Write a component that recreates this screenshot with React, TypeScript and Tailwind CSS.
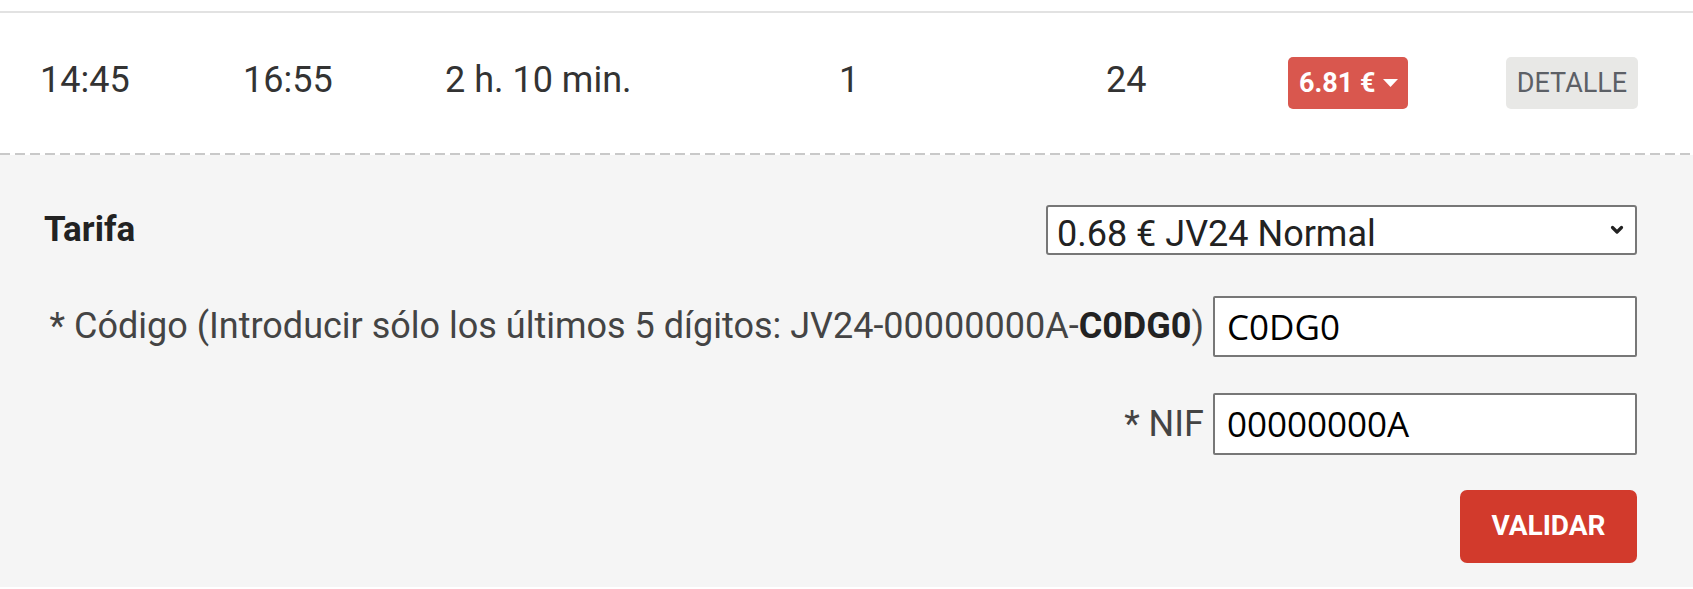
import { useState } from 'react';

function Caret() {
  return (
    <svg width="15" height="8" viewBox="0 0 15 8" className="shrink-0">
      <path d="M0 0 H15 L7.5 8 Z" fill="currentColor" />
    </svg>
  );
}

function Chevron() {
  return (
    <svg width="14" height="10" viewBox="0 0 14 10" className="pointer-events-none absolute right-[13px] top-1/2 -translate-y-1/2">
      <path d="M2.5 2.5 L7 7 L11.5 2.5" fill="none" stroke="#222" strokeWidth="3.2" strokeLinecap="round" strokeLinejoin="round" />
    </svg>
  );
}

export default function App() {
  const [tarifa, setTarifa] = useState('jv24');
  const [codigo, setCodigo] = useState('C0DG0');
  const [nif, setNif] = useState('00000000A');

  return (
    <div className="min-h-screen bg-white font-['Roboto',sans-serif]">
      <div className="mt-[11px] border-t-2 border-[#e2e2e2]">
        <div className="flex h-[140px] items-center pl-[40px] pr-[55px] text-[36px] text-[#333]">
          <span className="w-[203px] pb-[6px]">14:45</span>
          <span className="w-[202px] pb-[6px]">16:55</span>
          <span className="w-[394px] pb-[6px]">2 h. 10 min.</span>
          <span className="w-[267px] pb-[6px]">1</span>
          <span className="w-[182px] pb-[6px]">24</span>
          <button className="flex h-[52px] w-[120px] items-center gap-[7px] rounded-[5px] bg-[#d9574e] pl-[11px] text-[27px] font-bold text-white">
            6.81 €
            <Caret />
          </button>
          <button className="ml-auto h-[52px] w-[132px] rounded-[5px] bg-[#e8e8e6] text-[27px] text-[#5c6066]">
            DETALLE
          </button>
        </div>
      </div>

      <div className="h-[2px] bg-[repeating-linear-gradient(90deg,#c9c9c9_0_10px,transparent_10px_15px)]" />

      <div className="bg-[#f5f5f5] pb-[24px] pl-[44px] pr-[56px] pt-[49px]">
        <div className="flex items-center justify-between">
          <span className="text-[35px] font-bold text-[#222]">Tarifa</span>
          <div className="relative w-[591px]">
            <select
              value={tarifa}
              onChange={(e) => setTarifa(e.target.value)}
              className="h-[50px] w-full appearance-none rounded-[3px] border-2 border-[#777] bg-white pl-[9px] text-[36px] text-[#222]"
            >
              <option value="jv24">0.68 € JV24 Normal</option>
            </select>
            <Chevron />
          </div>
        </div>

        <div className="mt-[39px] flex items-center justify-end gap-[9px]">
          <label className="text-[36px] text-[#444]">
            * Código (Introducir sólo los últimos 5 dígitos: JV24-00000000A-<b className="text-[#222]">C0DG0</b>)
          </label>
          <input
            value={codigo}
            onChange={(e) => setCodigo(e.target.value)}
            className="h-[61px] w-[424px] rounded-[2px] border-2 border-[#777] bg-white px-[12px] font-['Open_Sans',sans-serif] text-[35px] text-black"
          />
        </div>

        <div className="mt-[36px] flex items-center justify-end gap-[9px]">
          <label className="text-[36px] text-[#444]">* NIF</label>
          <input
            value={nif}
            onChange={(e) => setNif(e.target.value)}
            className="h-[62px] w-[424px] rounded-[2px] border-2 border-[#777] bg-white px-[12px] font-['Open_Sans',sans-serif] text-[35px] text-black"
          />
        </div>

        <div className="mt-[35px] flex justify-end">
          <button className="h-[73px] w-[177px] rounded-[7px] bg-[#d23a2c] text-[28px] font-bold text-white">
            VALIDAR
          </button>
        </div>
      </div>
    </div>
  );
}
